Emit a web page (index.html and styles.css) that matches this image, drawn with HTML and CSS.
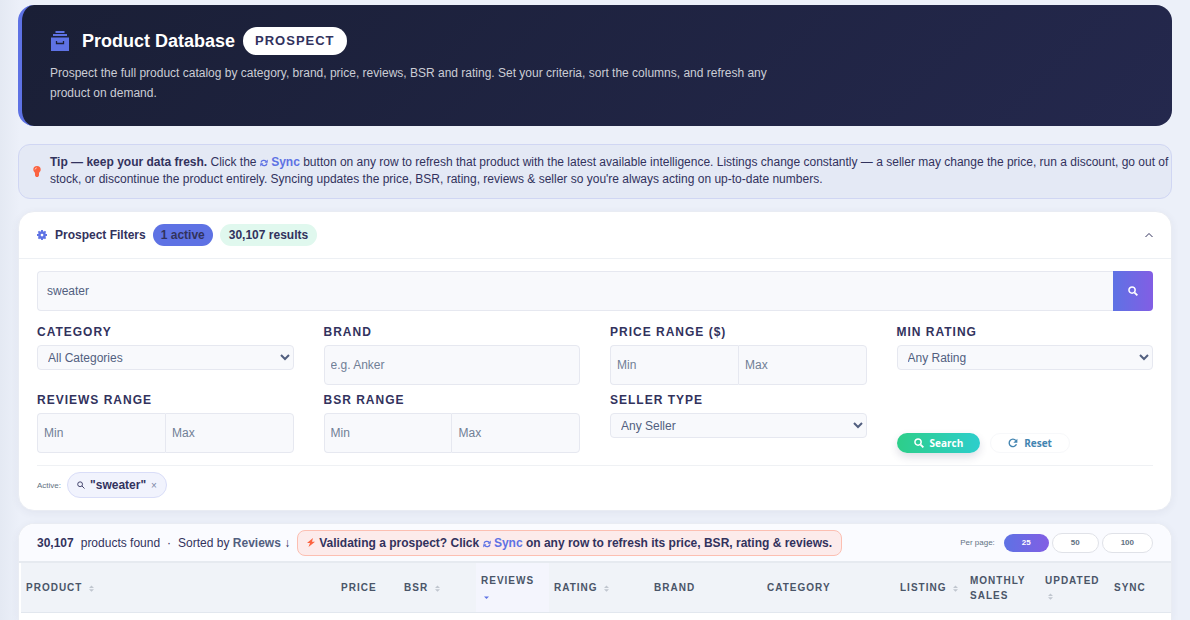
FILE: index.html
```html
<!DOCTYPE html>
<html lang="en">
<head>
    <meta charset="UTF-8">
    <meta name="viewport" content="width=device-width, initial-scale=1.0">
    <title>Product Database</title>
    <link rel="stylesheet" href="styles.css">
</head>
<body>
    <!-- shared icons -->
    <svg class="icon-defs" width="0" height="0" aria-hidden="true">
        <symbol id="icon-search" viewBox="0 0 16 16">
            <circle cx="6.5" cy="6.5" r="5" fill="none" stroke="currentColor" stroke-width="2.4"/>
            <path d="M10.5 10.5L15 15" stroke="currentColor" stroke-width="3"/>
        </symbol>
        <symbol id="icon-sync" viewBox="0 0 16 16">
            <path d="M2 7C3 2.500 9 1 12.500 5M14 9C13 13.500 7 15 3.500 11" fill="none" stroke="currentColor" stroke-width="2.400"/>
            <path d="M15.500 1v6.500H9zM.5 15V8.500H7z" fill="currentColor"/>
        </symbol>
        <symbol id="icon-sort" viewBox="0 0 8 10">
            <path d="M4 0l4 4H0zM4 10l4-4H0z" fill="currentColor"/>
        </symbol>
    </svg>

    <header class="hero">
        <div class="hero-title">
            <svg class="hero-icon" viewBox="0 0 18 20" aria-hidden="true">
                <path d="M4.500 0h9v2h-9zM2 3h14v2H2zM0 6.500h18V20H0z" fill="#5e72e4"/>
                <path d="M5.500 10v2.500h7V10" fill="none" stroke="#1c2038" stroke-width="1.300"/>
            </svg>
            <h1>Product Database</h1>
            <span class="hero-badge">PROSPECT</span>
        </div>
        <p>Prospect the full product catalog by category, brand, price, reviews, BSR and rating. Set your criteria, sort the columns, and refresh any product on demand.</p>
    </header>

    <section class="tip">
        <svg class="tip-icon" viewBox="0 0 8 11" aria-hidden="true">
            <path d="M4 0a3.700 3.700 0 0 0-3.700 3.700C.3 5.500 2 6 2 7.500h4c0-1.500 1.700-2 1.700-3.800A3.700 3.700 0 0 0 4 0zM2 7.500h4v2L5 11H3L2 9.500z" fill="#fb6340"/>
            <path d="M2 3.500Q2.200 2 3.800 1.800" fill="none" stroke="#fff" stroke-width=".6"/>
        </svg>
        <p><strong>Tip — keep your data fresh.</strong> Click the <span class="sync-word"><svg class="sync-icon"><use href="#icon-sync"/></svg> Sync</span> button on any row to refresh that product with the latest available intelligence. Listings change constantly — a seller may change the price, run a discount, go out of stock, or discontinue the product entirely. Syncing updates the price, BSR, rating, reviews &amp; seller so you're always acting on up-to-date numbers.</p>
    </section>

    <form class="card filters">
        <div class="filters-head">
            <svg class="gear-icon" viewBox="0 0 16 16" aria-hidden="true">
                <circle cx="8" cy="8" r="4.200" fill="none" stroke="#5e72e4" stroke-width="4"/>
                <path d="M8 0v3M8 13v3M0 8h3M13 8h3M2.300 2.300l2 2M11.700 11.700l2 2M2.300 13.700l2-2M11.700 4.300l2-2" stroke="#5e72e4" stroke-width="3"/>
            </svg>
            <h2>Prospect Filters</h2>
            <span class="pill pill-active">1 active</span>
            <span class="pill pill-results">30,107 results</span>
            <button type="button" class="collapse" aria-label="Collapse filters">
                <svg viewBox="0 0 8 6"><path d="M.5 5L4 1.500 7.500 5" fill="none" stroke="#32325d" stroke-width="1"/></svg>
            </button>
        </div>
        <div class="filters-body">
            <div class="keyword">
                <input type="text" value="sweater" aria-label="Keyword">
                <button type="submit" aria-label="Search keyword"><svg><use href="#icon-search"/></svg></button>
            </div>
            <div class="filter-grid">
                <div class="field">
                    <label for="category">CATEGORY</label>
                    <select id="category"><option>All Categories</option></select>
                </div>
                <div class="field">
                    <label for="brand">BRAND</label>
                    <input type="text" id="brand" placeholder="e.g. Anker">
                </div>
                <div class="field">
                    <label for="price-min">PRICE RANGE ($)</label>
                    <div class="range">
                        <input type="text" id="price-min" placeholder="Min">
                        <input type="text" placeholder="Max" aria-label="Maximum price">
                    </div>
                </div>
                <div class="field">
                    <label for="rating">MIN RATING</label>
                    <select id="rating"><option>Any Rating</option></select>
                </div>
                <div class="field">
                    <label for="reviews-min">REVIEWS RANGE</label>
                    <div class="range">
                        <input type="text" id="reviews-min" placeholder="Min">
                        <input type="text" placeholder="Max" aria-label="Maximum reviews">
                    </div>
                </div>
                <div class="field">
                    <label for="bsr-min">BSR RANGE</label>
                    <div class="range">
                        <input type="text" id="bsr-min" placeholder="Min">
                        <input type="text" placeholder="Max" aria-label="Maximum BSR">
                    </div>
                </div>
                <div class="field">
                    <label for="seller">SELLER TYPE</label>
                    <select id="seller"><option>Any Seller</option></select>
                </div>
                <div class="actions">
                    <button type="submit" class="btn btn-search"><svg><use href="#icon-search"/></svg>Search</button>
                    <button type="reset" class="btn btn-reset">
                        <svg viewBox="0 0 16 16"><path d="M12.500 4A6 6 0 1 0 13.500 10" fill="none" stroke="currentColor" stroke-width="2.200"/><path d="M15 1v6.500H8.500z" fill="currentColor"/></svg>Reset
                    </button>
                </div>
            </div>
            <div class="active-row">
                <span class="active-label">Active:</span>
                <span class="chip">
                    <svg viewBox="0 0 16 16"><path d="M11 6.500a4.800 4.800 0 1 1-9.600 0 4.800 4.800 0 0 1 9.600 0zM10 10l5 5" fill="none" stroke="currentColor" stroke-width="1.800"/></svg>
                    <span>"sweater"</span>
                    <button type="button" aria-label="Remove keyword">×</button>
                </span>
            </div>
        </div>
    </form>

    <section class="card results">
        <div class="toolbar">
            <strong class="count">30,107</strong>
            <span>products found</span>
            <span class="dot">·</span>
            <span>Sorted by <b>Reviews</b> ↓</span>
            <span class="notice">
                <svg class="bolt-icon" viewBox="0 0 8 9" aria-hidden="true"><path d="M6 0L0 5h3L1.500 9 8 3.700H5z" fill="#fb6340"/></svg>
                <span>Validating a prospect? Click <span class="sync-word"><svg class="sync-icon"><use href="#icon-sync"/></svg> Sync</span> on any row to refresh its price, BSR, rating &amp; reviews.</span>
            </span>
            <div class="per-page">
                <span>Per page:</span>
                <button type="button" class="current">25</button>
                <button type="button">50</button>
                <button type="button">100</button>
            </div>
        </div>
        <table>
            <thead>
                <tr>
                    <th>PRODUCT <svg><use href="#icon-sort"/></svg></th>
                    <th class="col-price">PRICE</th>
                    <th class="col-bsr">BSR <svg><use href="#icon-sort"/></svg></th>
                    <th class="col-reviews sorted">REVIEWS <svg viewBox="0 0 8 10"><path d="M4 9l4-4H0z" fill="currentColor"/></svg></th>
                    <th class="col-rating">RATING <svg><use href="#icon-sort"/></svg></th>
                    <th class="col-brand">BRAND</th>
                    <th class="col-category">CATEGORY</th>
                    <th class="col-listing">LISTING <svg><use href="#icon-sort"/></svg></th>
                    <th class="col-sales">MONTHLY SALES</th>
                    <th class="col-updated">UPDATED <svg><use href="#icon-sort"/></svg></th>
                    <th class="col-sync">SYNC</th>
                </tr>
            </thead>
        </table>
    </section>
</body>
</html>
```
FILE: styles.css
```css
* {
    box-sizing: border-box;
}
body {
    margin: 0;
    padding: 5px 18px 0;
    min-height: 100vh;
    display: flex;
    flex-direction: column;
    font-family: "Liberation Sans", Arial, sans-serif;
    font-size: 12px;
    color: #32325d;
    background: linear-gradient(90deg, #e4e9f3, #ecf0f9 20px);
}
h1, h2, p {
    margin: 0;
}
button, input, select {
    font-family: inherit;
}
button {
    cursor: pointer;
}
.icon-defs {
    position: absolute;
}

/* header */
.hero {
    padding: 22px 28px 23px;
    border-left: 4px solid #5e72e4;
    border-radius: 16px;
    background: linear-gradient(135deg, #1a1f36, #24284d);
    color: #cbcdd5;
}
.hero-title {
    display: flex;
    align-items: center;
    margin-bottom: 8px;
}
.hero-icon {
    width: 18px;
    height: 20px;
    margin: 0 13px 0 1px;
}
h1 {
    font-size: 18px;
    line-height: 28px;
    color: #fff;
}
.hero-badge {
    margin-left: 8px;
    padding: 0 12px;
    border-radius: 14px;
    background: #fff;
    color: #32325d;
    font-size: 13px;
    font-weight: bold;
    letter-spacing: 1px;
    line-height: 28px;
}
.hero p {
    max-width: 720px;
    line-height: 20px;
}

.tip {
    display: flex;
    align-items: center;
    gap: 9px;
    margin: 18px 0 12px;
    padding: 9px 2px 10px 14px;
    border: 1px solid #d0d6f3;
    border-radius: 12px;
    background: #e4e9f5;
    line-height: 17px;
}
.tip-icon {
    flex: none;
    width: 8px;
    height: 11px;
}
.sync-word {
    color: #5e72e4;
    font-weight: bold;
}
.sync-icon {
    width: 8px;
    height: 8px;
    vertical-align: -1px;
}

.card {
    border: 1px solid #e9ecf3;
    background: #fff;
    box-shadow: 0 2px 8px rgba(50, 50, 93, .06);
}

/* filters */
.filters {
    border-radius: 16px;
}
.filters-head {
    display: flex;
    align-items: center;
    height: 47px;
    padding: 0 18px;
    border-bottom: 1px solid #edf0f4;
}
.gear-icon {
    width: 10px;
    height: 10px;
    margin-right: 8px;
}
h2 {
    font-size: 12px;
}
.pill {
    margin-left: 7px;
    padding: 0 8px;
    border-radius: 11px;
    font-weight: bold;
    line-height: 22px;
}
.pill-active {
    background: #5e72e4;
}
.pill-results {
    padding: 0 9px;
    background: #e0f8ee;
}
.collapse {
    margin-left: auto;
    padding: 0;
    border: 0;
    background: none;
}
.collapse svg {
    display: block;
    width: 8px;
    height: 6px;
}
.filters-body {
    padding: 12px 18px;
}
.keyword {
    display: flex;
}
.filters input, .filters select {
    width: 100%;
    min-width: 0;
    border: 1px solid #e6e8f0;
    border-radius: 4px;
    background: #f8f9fc;
    color: #525f7f;
    font-size: 12px;
}
.filters input {
    height: 40px;
    padding: 0 6px;
}
.filters select {
    height: 25px;
    padding: 0 6px;
}
.filters input::placeholder {
    color: #718096;
}
.filters .keyword input {
    flex: 1;
    padding: 0 9px;
    border-right: 0;
    border-radius: 4px 0 0 4px;
}
.keyword button {
    width: 40px;
    padding: 0;
    border: 0;
    border-radius: 0 4px 4px 0;
    background: linear-gradient(90deg, #5e72e4, #825ee4);
    color: #fff;
}
.keyword svg {
    width: 10px;
    height: 10px;
}
.filter-grid {
    display: grid;
    grid-template-columns: repeat(4, 1fr);
    gap: 8px 30px;
    margin: 14px 0 12px;
}
.field label {
    display: block;
    height: 20px;
    font-weight: bold;
    letter-spacing: 1px;
    line-height: 14px;
}
.field select {
    display: block;
}
.range {
    display: flex;
}
.filters .range input:first-child {
    border-right: 0;
    border-radius: 4px 0 0 4px;
}
.filters .range input:last-child {
    border-radius: 0 4px 4px 0;
}
.actions {
    display: flex;
    align-items: flex-end;
    gap: 10px;
}
.btn {
    display: flex;
    align-items: center;
    gap: 6px;
    height: 20px;
    padding: 0 17px;
    border: 0;
    border-radius: 10px;
    font-family: "Open Sans", sans-serif;
    font-size: 10px;
    font-weight: bold;
}
.btn svg {
    width: 10px;
    height: 10px;
}
.btn-search {
    background: linear-gradient(90deg, #2dce89, #2dcecc);
    color: #fff;
    box-shadow: 0 4px 8px rgba(50, 50, 93, .16);
}
.btn-reset {
    border: 1px solid #f7f8fa;
    background: #fff;
    color: #4385b1;
}
.active-row {
    display: flex;
    align-items: center;
    gap: 6px;
    padding-top: 6px;
    border-top: 1px solid #eff1f4;
}
.active-label {
    color: #627283;
    font-size: 8px;
}
.chip {
    display: flex;
    align-items: center;
    gap: 5px;
    padding: 0 9px;
    border: 1px solid #d9ddf8;
    border-radius: 13px;
    background: #f1f3fd;
    font-weight: bold;
    line-height: 24px;
}
.chip svg {
    width: 8px;
    height: 8px;
}
.chip button {
    padding: 0;
    border: 0;
    background: none;
    color: #7b86a5;
    font-size: 10px;
}

/* results */
.results {
    flex: 1;
    margin-top: 12px;
    border-bottom: 0;
    border-radius: 16px 16px 0 0;
}
.toolbar {
    display: flex;
    align-items: center;
    gap: 7px;
    height: 39px;
    padding: 0 18px;
    border-bottom: 2px solid #e6eaf0;
    border-radius: 16px 16px 0 0;
    background: #fafbff;
    white-space: nowrap;
}
.toolbar b {
    color: #525f7f;
}
.notice {
    display: flex;
    align-items: center;
    gap: 4px;
    padding: 0 9px;
    border: 1px solid #fcbfb2;
    border-radius: 8px;
    background: #fcebeb;
    font-weight: bold;
    line-height: 24px;
}
.bolt-icon {
    width: 8px;
    height: 9px;
}
.per-page {
    display: flex;
    align-items: center;
    gap: 3px;
    margin-left: auto;
    color: #627283;
    font-size: 8px;
}
.per-page span {
    margin-right: 6px;
}
.per-page button {
    height: 20px;
    padding: 0 18px;
    border: 1px solid #e0e2e8;
    border-radius: 10px;
    background: #fff;
    color: #627283;
    font-size: 8px;
    font-weight: bold;
}
.per-page .current {
    height: 18px;
    border: 0;
    background: linear-gradient(90deg, #5e72e4, #825ee4);
    color: #fff;
}
table {
    width: 100%;
    padding-left: 2px;
    border-spacing: 0;
    table-layout: fixed;
}
th {
    height: 50px;
    padding: 0 5px;
    border-bottom: 1px solid #e2e7ee;
    background: #f0f3f8;
    color: #4a5568;
    font-size: 10px;
    letter-spacing: 1px;
    line-height: 15px;
    text-align: left;
}
th svg {
    width: 5px;
    height: 7px;
    margin-left: 3px;
    color: #c0c6cf;
    vertical-align: -1px;
}
.sorted {
    background: #f4f5fd;
}
.sorted svg {
    color: #5e72e4;
}
.col-price { width: 63px; }
.col-bsr { width: 77px; }
.col-reviews { width: 73px; }
.col-rating { width: 100px; }
.col-brand { width: 113px; }
.col-category { width: 133px; }
.col-listing { width: 70px; }
.col-sales { width: 75px; }
.col-updated { width: 69px; }
.col-sync { width: 62px; }
```
